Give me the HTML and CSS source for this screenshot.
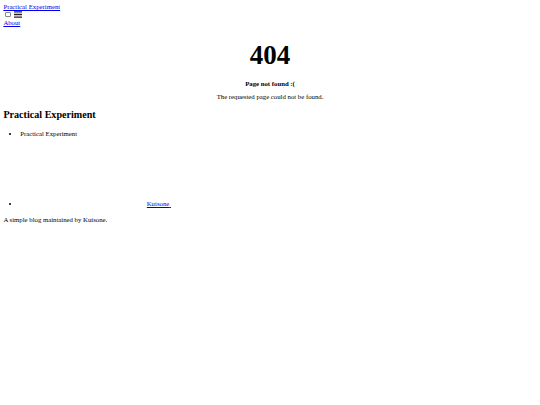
FILE: index.html
```html
<!DOCTYPE html>
<html lang="en">
<head>
<meta charset="utf-8">
<title>Practical Experiment</title>
<link rel="stylesheet" href="styles.css">
</head>
<body>
<header class="site-header">
  <a class="site-title" href="#">Practical Experiment</a>
  <nav class="site-nav">
    <input type="checkbox" id="nav-trigger" class="nav-trigger">
    <label for="nav-trigger" class="menu-icon">
      <svg viewBox="0 0 18 15" width="8" height="7"><path fill="#222" d="M0 0h18v3H0zM0 6h18v3H0zM0 12h18v3H0z"/></svg>
    </label>
    <div class="trigger"><a class="page-link" href="#">About</a></div>
  </nav>
</header>
<main class="page-content">
  <div class="container">
    <h1 class="big">404</h1>
    <p class="lead"><strong>Page not found :(</strong></p>
    <p>The requested page could not be found.</p>
  </div>
</main>
<footer class="site-footer">
  <h2 class="footer-heading">Practical Experiment</h2>
  <ul class="contact-list"><li>Practical Experiment</li></ul>
  <ul class="social-list"><li><a href="#"><svg class="svg-icon" viewBox="0 0 16 16"></svg><span class="username">Kuisone</span>&nbsp;</a></li></ul>
  <p class="desc">A simple blog maintained by Kuisone.</p>
</footer>
</body>
</html>
```
FILE: styles.css
```css
html { font-size: 6.75px; }
body {
  margin: 3.375px;
  font-family: "Liberation Serif", "Times New Roman", serif;
  font-size: 6.75px;
  line-height: normal;
  color: #000;
  background: #fff;
}
a { color: #0000ee; }
.site-title, .page-link { display: inline; }
.site-nav { display: block; }
.nav-trigger {
  appearance: none;
  -webkit-appearance: none;
  box-sizing: border-box;
  width: 5.5px;
  height: 5.5px;
  margin: 1.3px 1.3px 1.3px 1.7px;
  border: 0.6px solid #858585;
  border-radius: 1px;
  background: #fff;
  vertical-align: -0.5px;
}
.menu-icon svg { vertical-align: -0.5px; }
.container { text-align: center; }
.big {
  font-size: 27px;
  font-weight: bold;
  margin: 14px 0 8.75px;
  line-height: normal;
}
p { margin: 6.75px 0; }
.footer-heading {
  font-size: 10.125px;
  margin: 8.4px 0 10.4px;
}
.contact-list, .social-list {
  margin: 6.75px 0;
  padding-left: 16.875px;
}
.social-list { margin-bottom: 8.75px; }
.svg-icon {
  width: 126.5px;
  height: 62.3px;
}
.desc { margin: 8.75px 0; }
```
